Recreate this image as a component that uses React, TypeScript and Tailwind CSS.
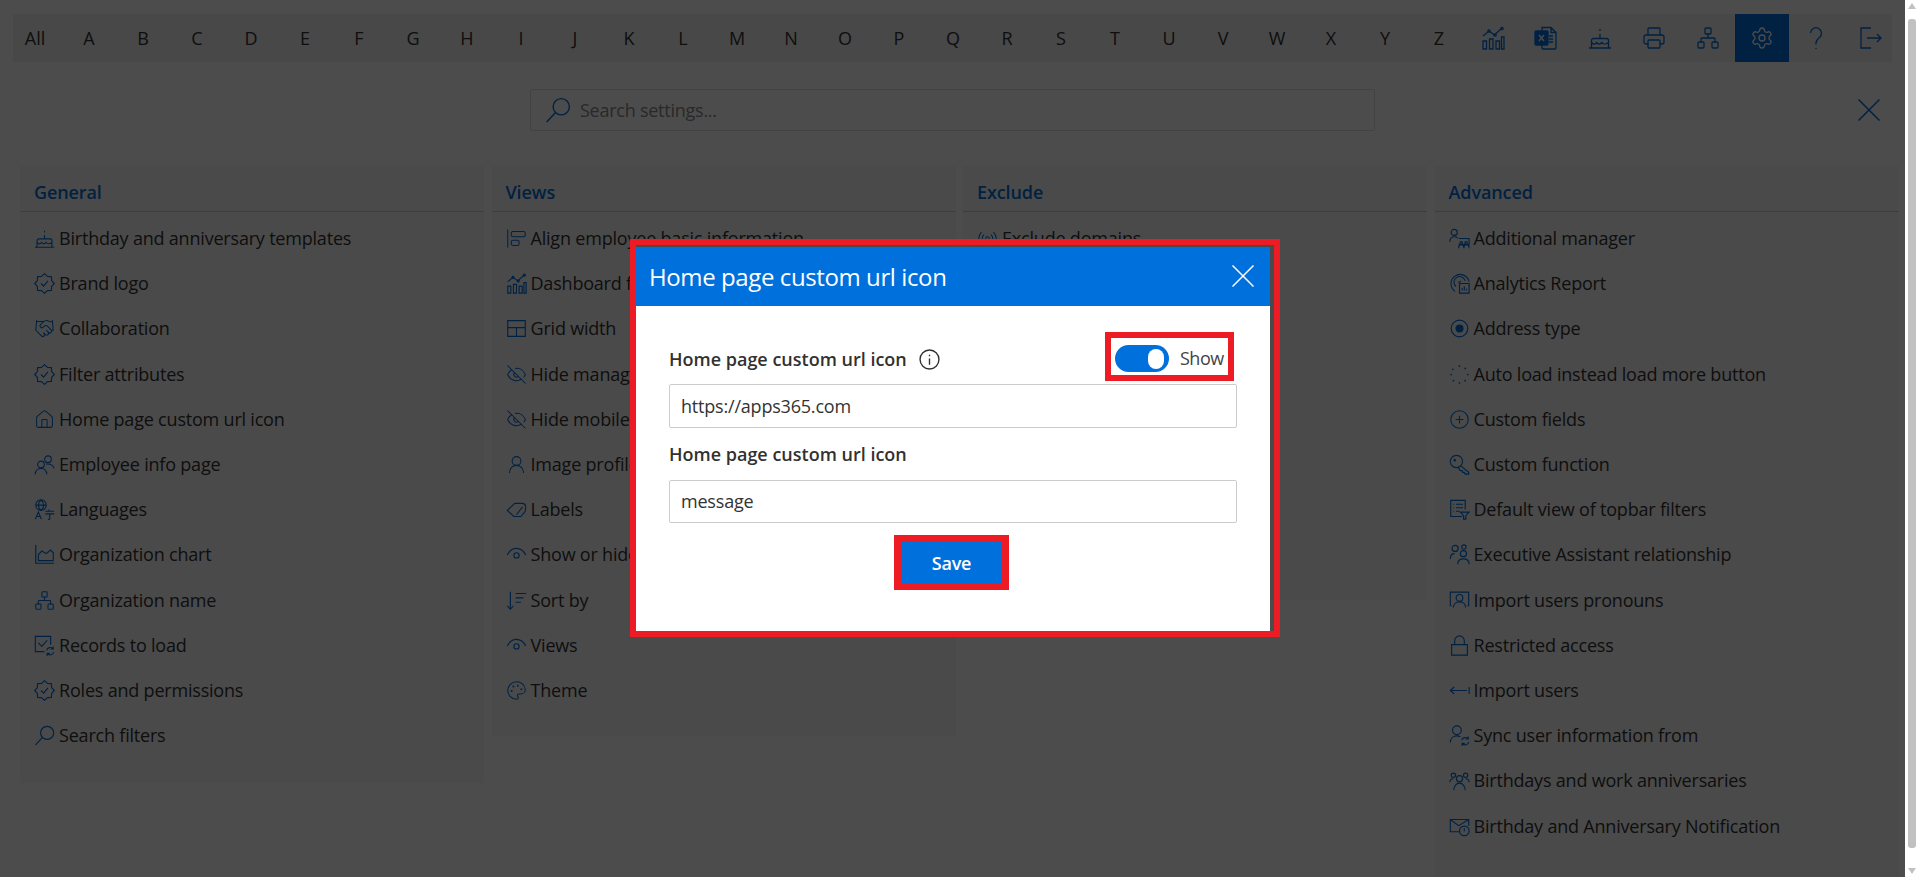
import React from 'react';
import {
  AlignStartVertical,
  CirclePlus,
  EyeOff,
  Handshake,
  House,
  Network,
  Palette,
  Printer,
  Radio,
  Settings,
  UserRound,
} from 'lucide-react';

const font = "font-['Open_Sans','Liberation_Sans',sans-serif]";

const Ic: React.FC<{ children: React.ReactNode; className?: string }> = ({ children, className = 'w-[21px] h-[21px]' }) => (
  <svg viewBox="0 0 24 24" fill="none" stroke="currentColor" strokeWidth={1.3} className={className}>
    {children}
  </svg>
);

const lucide = 'w-[21px] h-[21px]';

// scalloped outline for the check badge
const badgeOutline = (() => {
  const pts: string[] = [];
  for (let i = 0; i < 16; i++) {
    const a = (i / 16) * Math.PI * 2;
    const r = i % 2 === 0 ? 11.2 : 8.8;
    pts.push(`${(12 + r * Math.cos(a)).toFixed(2)} ${(12 + r * Math.sin(a)).toFixed(2)}`);
  }
  return `M${pts.join('L')}Z`;
})();

const Badge = () => (
  <Ic>
    <path d={badgeOutline} strokeLinejoin="round" />
    <path d="m8 12 3 3 5-6" />
  </Ic>
);
const CloseIcon = (p: { className?: string }) => (
  <svg viewBox="0 0 22 22" fill="none" stroke="currentColor" strokeWidth={1.5} className={p.className}>
    <path d="m0.500 0.500 21 21M21.500 0.500l-21 21" />
  </svg>
);
const CakeIcon = (p: { className?: string }) => (
  <Ic {...p}>
    <path d="M1 22h22M3.500 22v-7.500a2 2 0 0 1 2-2h13a2 2 0 0 1 2 2V22M3.500 16.500c2 2.200 3.400 2.200 5.200 0 1.800 2.200 3.200 2.200 5 0 1.800 2.200 3.200 2.200 6.800 0M12 12.500V8M12 3v2" />
  </Ic>
);
const ChartIcon = (p: { className?: string }) => (
  <Ic {...p}>
    <path d="M2 15h3.500v8H2zM8.500 13H12v10H8.500zM15 15h3.500v8H15zM20.500 11H23v12h-2.500zM2 10l6-5 5.500 4L21 2" />
    <circle cx="8" cy="5" r="1.200" />
    <circle cx="14" cy="9" r="1.200" />
    <circle cx="21" cy="2.500" r="1.200" />
  </Ic>
);
const SearchIcon = (p: { className?: string }) => (
  <Ic {...p}>
    <circle cx="15" cy="9" r="7.500" />
    <path d="M9.500 14.500 1.500 23" />
  </Ic>
);
const ArcEye = () => (
  <Ic>
    <path d="M1.500 12.500C4 7.500 8 5 12 5s8 2.500 10.500 7.500" />
    <circle cx="12" cy="13" r="3" />
  </Ic>
);
const SyncMark = () => <path d="M14.500 17.500a4.200 4.200 0 0 1 7.200-1.800M22.500 19.500a4.200 4.200 0 0 1-7.200 1.800M22 13v3h-3M15 24v-3h3" />;

const icons: Record<string, React.ReactNode> = {
  'Birthday and anniversary templates': <CakeIcon className={lucide} />,
  'Brand logo': <Badge />,
  Collaboration: <Handshake className={lucide} strokeWidth={1.2} />,
  'Filter attributes': <Badge />,
  'Home page custom url icon': <House className={lucide} strokeWidth={1.2} />,
  'Employee info page': (
    <Ic>
      <circle cx="16" cy="6" r="3.800" />
      <circle cx="8" cy="12" r="3.800" />
      <path d="M1.500 23c0-4 3-6.500 6.500-6.500S14.500 19 14.500 23M14 11.500c5-.5 8 1.500 9 5" />
    </Ic>
  ),
  Languages: (
    <Ic>
      <circle cx="8" cy="7" r="6" />
      <path d="M2 7h12M8 1c-4 4-4 8 0 12M8 1c4 4 4 8 0 12M1.500 23l3.500-8 3.500 8M3 20h4M13 14h10M13 17h10M18 17v6l-2 .5M17 12v2" />
    </Ic>
  ),
  'Organization chart': (
    <Ic>
      <path d="M2 1v21h21M5 19v-7l4-4 5 3 5-4 3 3v9z" />
    </Ic>
  ),
  'Organization name': <Network className={lucide} strokeWidth={1.2} />,
  'Records to load': (
    <Ic>
      <path d="M12 19H1.500V1.500H19V11M5 9l4 4 6-7" />
      <SyncMark />
    </Ic>
  ),
  'Roles and permissions': <Badge />,
  'Search filters': <SearchIcon className={lucide} />,
  'Align employee basic information': <AlignStartVertical className={lucide} strokeWidth={1.2} />,
  'Dashboard filters': <ChartIcon className={lucide} />,
  'Grid width': (
    <Ic>
      <path d="M2 3h20v18H2zM2 11h20M12 11v10" />
    </Ic>
  ),
  'Hide manager': <EyeOff className={lucide} strokeWidth={1.2} />,
  'Hide mobile': <EyeOff className={lucide} strokeWidth={1.2} />,
  'Image profile': <UserRound className={lucide} strokeWidth={1.2} />,
  Labels: (
    <Ic>
      <path d="M1.500 13 10 5h9a4 4 0 0 1 3.500 4l-.5 5-5 6H9zM12 18l7-9" />
    </Ic>
  ),
  'Show or hide': <ArcEye />,
  'Sort by': (
    <Ic>
      <path d="M5 2v20M1.500 18 5 22l3.500-4M11 4h12M11 9h9M11 14h6" />
    </Ic>
  ),
  Views: <ArcEye />,
  Theme: <Palette className={lucide} strokeWidth={1.2} />,
  'Exclude domains': <Radio className={lucide} strokeWidth={1.2} />,
  'Additional manager': (
    <Ic>
      <circle cx="6" cy="5" r="3.500" />
      <path d="M1 16c0-4 2-6 5-6 2 0 3 .5 4 1.500M11 12h12v7H11M14 15.500a1.500 1.500 0 1 0 .01 0M19.500 15.500a1.500 1.500 0 1 0 .01 0M11 23c0-3 1-4 3-4s3 1 3 4M17 23c0-3 1-4 3-4s3 1 3 4" />
    </Ic>
  ),
  'Analytics Report': (
    <Ic>
      <path d="M7 21A10.500 10.500 0 1 1 23 10M8 15.500A6.500 6.500 0 1 1 18.500 9M11 11.500A2.500 2.500 0 0 1 14 9.500" />
      <path d="M12 12h11v11H12zM15 20v-3M17.500 20v-5M20 20v-2" />
    </Ic>
  ),
  'Address type': (
    <Ic>
      <circle cx="12" cy="12" r="9.500" />
      <circle cx="12" cy="12" r="4" fill="currentColor" />
    </Ic>
  ),
  'Auto load instead load more button': (
    <Ic>
      <path strokeWidth={2} strokeLinecap="round" d="M12 2.500v.01M18.500 5v.01M21.500 12v.01M18.500 19v.01M12 21.500v.01M5 19v.01M2.500 12v.01M4.500 6v.01" />
    </Ic>
  ),
  'Custom fields': <CirclePlus className={lucide} strokeWidth={1.2} />,
  'Custom function': (
    <Ic>
      <circle cx="8.500" cy="8.500" r="7" />
      <path d="M13.500 13.500 22.500 21v2h-4l-1-2h-2l-.5-2h-2l-2.500-3.500" />
      <circle cx="6.500" cy="7" r=".8" />
    </Ic>
  ),
  'Default view of topbar filters': (
    <Ic>
      <path d="M15 20H2V1.500h16.500V12M5 6h1M8 6h8M5 10h1M8 10h8M5 14h1M8 14h4M13 15h10l-3.800 4v4h-2.500v-4z" />
    </Ic>
  ),
  'Executive Assistant relationship': (
    <Ic>
      <circle cx="7" cy="5" r="3.500" />
      <circle cx="16.500" cy="11" r="3.500" />
      <circle cx="17" cy="3.500" r="2.500" />
      <path d="M1.500 17c0-4 2.500-6 5-6M10 23c0-4 3-6 6.500-6s6.500 2 6.500 6" />
    </Ic>
  ),
  'Import users pronouns': (
    <Ic>
      <path d="M3 18H1.500V2.500h21V18H21" />
      <circle cx="12" cy="9" r="3.800" />
      <path d="M5 20c0-4 3-6.500 7-6.500s7 2.500 7 6.500" />
    </Ic>
  ),
  'Restricted access': (
    <Ic>
      <path d="M3 11h18v12H3zM6.500 11V6.500a5.500 5.500 0 0 1 11 0V11" />
    </Ic>
  ),
  'Import users': (
    <Ic>
      <path d="M1.500 12h19M6 8l-4.500 4L6 16M23 8v8" />
    </Ic>
  ),
  'Sync user information from': (
    <Ic>
      <circle cx="9" cy="6" r="5" />
      <path d="M1.500 20c0-5 3.500-7.500 7.500-7.500 1.500 0 3 .4 4 1" />
      <SyncMark />
    </Ic>
  ),
  'Birthdays and work anniversaries': (
    <Ic>
      <circle cx="5" cy="6" r="2.500" />
      <circle cx="19" cy="6" r="2.500" />
      <circle cx="12" cy="10" r="3.500" />
      <path d="M1 14c0-2 1.500-4 4-4M23 14c0-2-1.500-4-4-4M5.500 23c0-4 2.500-8 6.500-8s6.500 4 6.500 8" />
    </Ic>
  ),
  'Birthday and Anniversary Notification': (
    <Ic>
      <path d="M12 18H1.500V4h21v7M1.500 4 11 11l11.500-7" />
      <circle cx="17.500" cy="17" r="5.500" />
      <path d="M17.500 14v3.500" />
    </Ic>
  ),
};

const columns = [
  {
    title: 'General',
    height: 'h-[617px]',
    items: [
      'Birthday and anniversary templates',
      'Brand logo',
      'Collaboration',
      'Filter attributes',
      'Home page custom url icon',
      'Employee info page',
      'Languages',
      'Organization chart',
      'Organization name',
      'Records to load',
      'Roles and permissions',
      'Search filters',
    ],
  },
  {
    title: 'Views',
    height: 'h-[570px]',
    items: [
      'Align employee basic information',
      'Dashboard filters',
      'Grid width',
      'Hide manager',
      'Hide mobile',
      'Image profile',
      'Labels',
      'Show or hide',
      'Sort by',
      'Views',
      'Theme',
    ],
  },
  { title: 'Exclude', height: 'h-[434px]', items: ['Exclude domains'] },
  {
    title: 'Advanced',
    height: 'h-[720px]',
    items: [
      'Additional manager',
      'Analytics Report',
      'Address type',
      'Auto load instead load more button',
      'Custom fields',
      'Custom function',
      'Default view of topbar filters',
      'Executive Assistant relationship',
      'Import users pronouns',
      'Restricted access',
      'Import users',
      'Sync user information from',
      'Birthdays and work anniversaries',
      'Birthday and Anniversary Notification',
    ],
  },
];

const letters = 'ABCDEFGHIJKLMNOPQRSTUVWXYZ'.split('');

const Toolbar = () => {
  const cell = 'w-[54px] h-full flex items-center justify-center shrink-0';
  const tb = 'w-[24px] h-[24px] text-[#0070dd]';
  return (
    <div className="mt-[13px] ml-[13px] w-[1879px] h-[48px] shrink-0 bg-[#f0f0f0] flex items-center text-[18px] text-[#333] overflow-hidden">
      <div className="w-[49px] pr-[5px] h-full flex items-center justify-center shrink-0">All</div>
      {letters.map((l) => (
        <div key={l} className={cell}>
          {l}
        </div>
      ))}
      <div className="w-[53px] h-full flex items-center justify-center shrink-0">
        <ChartIcon className={tb} />
      </div>
      <div className={cell}>
        <svg viewBox="0 0 24 24" fill="none" stroke="currentColor" strokeWidth={1.3} className={tb}>
          <path d="M8 5V1.500h9l5 5V22a1 1 0 0 1-1 1H9a1 1 0 0 1-1-1v-3M17 1.500v5h5M15 10h4M15 13h4M15 16h4" />
          <rect x="1" y="5" width="13" height="14" rx="1" fill="currentColor" />
          <path d="m5 9 5 6M10 9l-5 6" stroke="#f0f0f0" strokeWidth={1.5} />
        </svg>
      </div>
      <div className={cell}>
        <CakeIcon className={tb} />
      </div>
      <div className={cell}>
        <Printer className={tb} strokeWidth={1.3} />
      </div>
      <div className={cell}>
        <Network className={tb} strokeWidth={1.3} />
      </div>
      <div className={`${cell} bg-[#0070dd]`}>
        <Settings className="w-[24px] h-[24px] text-white" strokeWidth={1.3} />
      </div>
      <div className={cell}>
        <Ic className={tb}>
          <path d="M6.500 7a5.500 5.500 0 1 1 9 4.500c-2 1.500-3.500 3-3.500 5.500v1.500M12 22v1" />
        </Ic>
      </div>
      <div className="w-[50px] pl-[5px] h-full flex items-center justify-center shrink-0">
        <Ic className={tb}>
          <path d="M12 2H2v20h10M8 12h14M18 8l4 4-4 4" />
        </Ic>
      </div>
    </div>
  );
};

const Dialog = () => (
  <div className="absolute left-[630px] top-[239px] w-[650px] border-[6px] border-[#ed1c24] pt-[2px] pr-[4px]">
    <div className="bg-white tracking-[-0.2px]">
      <div className="h-[59px] bg-[#0070dd] text-white flex items-center justify-between pl-[13px] pr-[16px]">
        <span className="text-[24px] tracking-[-0.4px]">Home page custom url icon</span>
        <CloseIcon className="w-[22px] h-[22px] -mt-[2px]" />
      </div>
      <div className="pt-[26px] px-[33px] pb-[41px] text-[#333]">
        <div className="h-[52px] flex justify-between pr-[3px]">
          <div className="mt-[15px] flex items-center h-[24px] gap-[12px] font-semibold text-[18px] tracking-normal text-[#323130]">
            <span>Home page custom url icon</span>
            <svg viewBox="0 0 20 20" fill="none" stroke="currentColor" strokeWidth={1.3} className="w-[21px] h-[21px]">
              <circle cx="10" cy="10" r="9" />
              <path d="M10 9v6M10 5.500v1.500" />
            </svg>
          </div>
          <div className="w-[129px] h-[49px] border-[6px] border-[#ed1c24] flex items-center pt-1 pl-[4px] gap-[11px]">
            <div className="w-[54px] h-[27px] rounded-full bg-[#0070dd] flex items-center justify-end pr-[5px] shrink-0">
              <div className="w-[16px] h-[20px] rounded-full bg-white" />
            </div>
            <span className="text-[18px] tracking-[-0.5px] text-[#444]">Show</span>
          </div>
        </div>
        <div className="h-[44px] border border-[#ccc] rounded-[2px] flex items-center pl-[11px] text-[18px]">https://apps365.com</div>
        <div className="h-[52px] pt-[14px] leading-[24px] font-semibold text-[18px] tracking-normal text-[#323130]">Home page custom url icon</div>
        <div className="h-[43px] border border-[#ccc] rounded-[2px] flex items-center pl-[11px] text-[18px]">message</div>
        <div className="mt-[12px] flex justify-center pr-[3px]">
          <div className="w-[115px] h-[55px] border-[7px] border-[#ed1c24]">
            <div className="w-full h-full pt-px bg-[#0070dd] text-white font-semibold text-[18px] flex items-center justify-center">Save</div>
          </div>
        </div>
      </div>
    </div>
  </div>
);

export default function App() {
  return (
    <div className={`w-[1918px] h-[877px] overflow-hidden flex bg-white ${font}`}>
      <div className="relative flex-1 h-full overflow-hidden">
        <div className="h-full flex flex-col">
          <div className="h-px shrink-0" />
          <Toolbar />
          <div className="mt-[27px] flex items-center h-[42px] shrink-0">
            <div className="ml-[530px] w-[845px] h-full border border-[#ddd] rounded-[2px] flex items-center pl-[14px] gap-[9px] text-[18px] tracking-[-0.25px] text-[#8a8a8a]">
              <SearchIcon className="w-[26px] h-[26px] text-[#0070dd]" />
              <span>Search settings...</span>
            </div>
            <CloseIcon className="ml-[483px] w-[22px] h-[22px] text-[#0070dd]" />
          </div>
          <div className="mt-[35px] ml-[20px] flex gap-[7.5px] items-start">
            {columns.map((col) => (
              <div key={col.title} className={`w-[464px] shrink-0 bg-[#f8f8f8] ${col.height}`}>
                <div className="h-[46px] border-b border-[#ccc] pl-[14px] pt-[10px] leading-[32px] font-semibold text-[18px] tracking-[-0.1px] text-[#0070dd]">{col.title}</div>
                <ul className="pt-[4px]">
                  {col.items.map((item) => (
                    <li key={item} className="h-[45.2px] flex items-center pl-[14px] gap-[4px] text-[18px] tracking-[-0.2px] text-[#333]">
                      <span className="w-[21px] h-[21px] text-[#0070dd] shrink-0">{icons[item]}</span>
                      <span className="whitespace-nowrap">{item}</span>
                    </li>
                  ))}
                </ul>
              </div>
            ))}
          </div>
        </div>
        <div className="absolute inset-0 bg-[rgba(0,0,0,0.7)]" />
        <Dialog />
      </div>
      <div className="w-[13px] h-full relative bg-white">
        <div className="absolute left-[3px] top-[3px] w-0 h-0 border-x-[4px] border-x-transparent border-b-[6px] border-b-[#c1c1c1]" />
        <div className="absolute left-[3px] top-[19px] w-[8px] h-[829px] rounded-[3px] bg-[#c1c1c1]" />
        <div className="absolute left-[3px] bottom-[3px] w-0 h-0 border-x-[4px] border-x-transparent border-t-[6px] border-t-[#c1c1c1]" />
      </div>
    </div>
  );
}
